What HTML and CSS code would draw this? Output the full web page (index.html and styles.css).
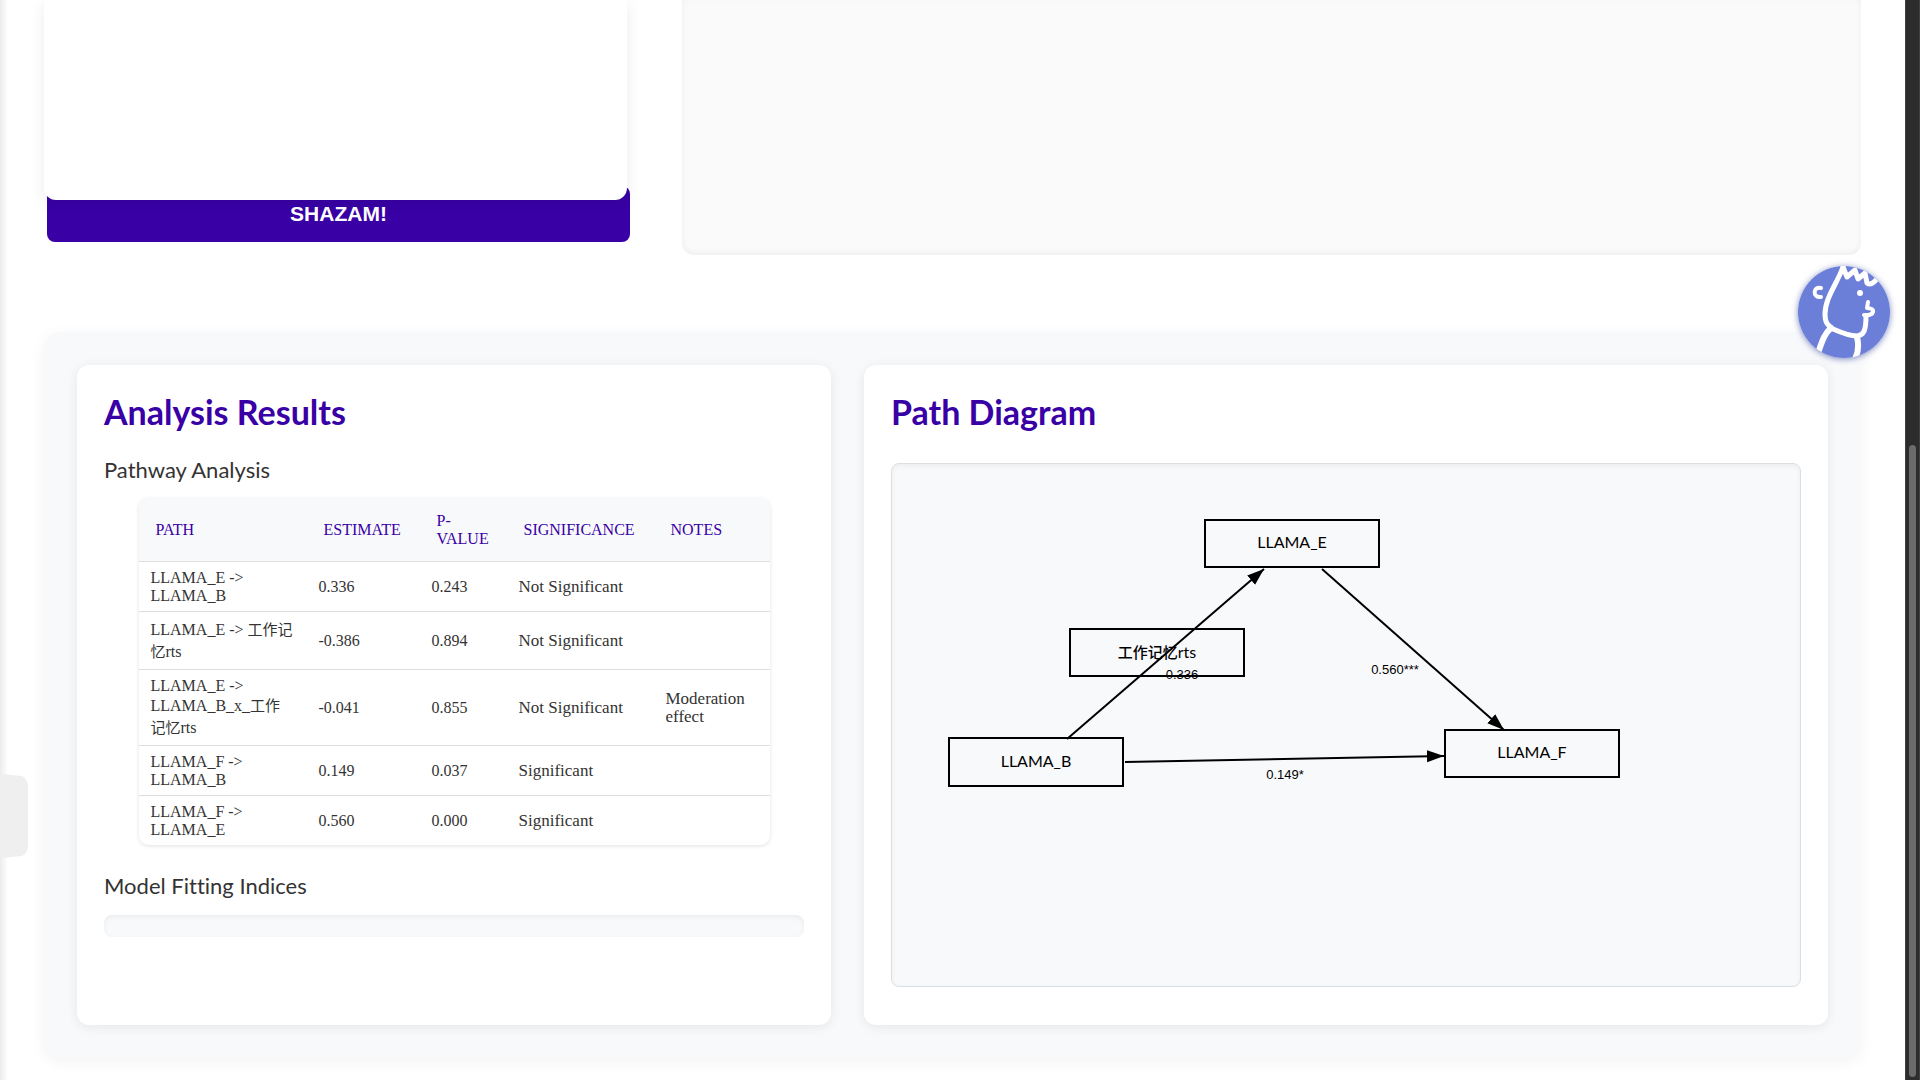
FILE: index.html
```html
<!DOCTYPE html>
<html lang="en">
<head>
<meta charset="utf-8">
<meta name="viewport" content="width=device-width, initial-scale=1">
<title>Path Analysis</title>
<link rel="stylesheet" href="styles.css">
</head>
<body>
<div class="page">
  <main class="content">
    <section class="workspace">
      <form class="setup">
        <div class="setup-card"></div>
        <button class="run" type="button">SHAZAM!</button>
      </form>
      <div class="canvas"></div>
    </section>

    <section class="results">
      <article class="card">
        <h2>Analysis Results</h2>
        <h3>Pathway Analysis</h3>
        <table class="paths">
          <colgroup><col class="c-path"><col class="c-est"><col class="c-p"><col class="c-sig"><col class="c-notes"></colgroup>
          <thead>
            <tr><th>PATH</th><th>ESTIMATE</th><th>P-<br>VALUE</th><th>SIGNIFICANCE</th><th>NOTES</th></tr>
          </thead>
          <tbody>
            <tr><td class="path">LLAMA_E -&gt;<br>LLAMA_B</td><td>0.336</td><td>0.243</td><td class="note">Not Significant</td><td class="note"></td></tr>
            <tr><td class="path">LLAMA_E -&gt; <span class="cjk">工作记<br>忆</span>rts</td><td>-0.386</td><td>0.894</td><td class="note">Not Significant</td><td class="note"></td></tr>
            <tr><td class="path">LLAMA_E -&gt;<br>LLAMA_B_x_<span class="cjk">工作<br>记忆</span>rts</td><td>-0.041</td><td>0.855</td><td class="note">Not Significant</td><td class="note">Moderation effect</td></tr>
            <tr><td class="path">LLAMA_F -&gt;<br>LLAMA_B</td><td>0.149</td><td>0.037</td><td class="note">Significant</td><td class="note"></td></tr>
            <tr><td class="path">LLAMA_F -&gt;<br>LLAMA_E</td><td>0.560</td><td>0.000</td><td class="note">Significant</td><td class="note"></td></tr>
          </tbody>
        </table>
        <h3>Model Fitting Indices</h3>
        <div class="indices"></div>
      </article>

      <article class="card">
        <h2>Path Diagram</h2>
        <div class="diagram">
          <svg width="906" height="522" viewBox="893 464 906 522" role="img" aria-label="Path diagram">
            <defs>
              <marker id="arrow" markerUnits="userSpaceOnUse" markerWidth="18" markerHeight="14" refX="17" refY="6" orient="auto"><path d="M0 0L17 6L0 12Z"/></marker>
            </defs>
            <g class="node">
              <rect x="1205" y="520" width="174" height="47"/>
              <rect x="1070" y="629" width="174" height="47"/>
              <rect x="949" y="738" width="174" height="48"/>
              <rect x="1445" y="730" width="174" height="47"/>
            </g>
            <g class="name">
              <text x="1292" y="548">LLAMA_E</text>
              <text x="1157" y="658"><tspan class="strong">工作记忆</tspan>rts</text>
              <text x="1036" y="767">LLAMA_B</text>
              <text x="1532" y="758">LLAMA_F</text>
            </g>
            <g class="edge">
              <path d="M1067 739L1264 569"/>
              <path d="M1322 569L1504 730"/>
              <path d="M1125 762L1444 756"/>
            </g>
            <g class="weight">
              <text x="1182" y="679">0.336</text>
              <text x="1395" y="674">0.560***</text>
              <text x="1285" y="779">0.149*</text>
            </g>
          </svg>
        </div>
      </article>
    </section>
  </main>
  <div class="scrollbar"><div class="thumb"></div></div>
</div>

<div class="drawer-edge"></div>
<button class="drawer-tab" type="button" aria-label="Open sidebar">
  <svg width="29" height="85" viewBox="0 0 29 85"><path d="M0 0L22 2Q28 5 28 13V72Q28 79 22 82L0 84Z" fill="#efefef"/></svg>
</button>
<button class="assistant" type="button" aria-label="Open assistant">
  <svg width="92" height="92" viewBox="0 0 92 92">
    <defs><clipPath id="disc"><circle cx="46" cy="46" r="46"/></clipPath></defs>
    <circle cx="46" cy="46" r="46" fill="#6c7fd8"/>
    <g clip-path="url(#disc)" fill="none" stroke="#fff" stroke-width="5" stroke-linecap="round" stroke-linejoin="round">
      <path d="M45 1C39 18 27 32 27 48C27 56 29 59 35 63C44 67 52 70 59 70C66 69 68 64 68 50"/>
      <path d="M45 1L49 11L57 4L60 13L67 7L69 17C73 20 76 16 78 14"/>
      <path d="M23 22C15 20 14 32 23 31" stroke-width="4"/>
      <path d="M70 36L69 42C78 42 77 50 66 49" stroke-width="4"/>
      <path d="M33 62C26 68 24 76 20 87M59 71C61 79 60 87 57 93" stroke-width="6"/>
      <circle cx="62" cy="27" r="3" fill="#fff" stroke="none"/>
    </g>
  </svg>
</button>
</body>
</html>
```
FILE: styles.css
```css
* { box-sizing: border-box; }

body {
  margin: 0;
  background: #fff;
  color: #333;
  font-family: Lato, "Noto Sans CJK SC", sans-serif;
}

.page { display: flex; min-height: 100vh; }

.content { flex: 1; min-width: 0; padding: 0 44px 22px; }

/* Setup form and canvas, scrolled so that only their lower ends show */
.workspace {
  display: grid;
  grid-template-columns: 586fr 1179fr;
  gap: 52px;
  margin-bottom: 77px;
}

.setup { display: flex; flex-direction: column; padding-bottom: 13px; }

.setup-card {
  position: relative;
  z-index: 1;
  height: 200px;
  margin-right: 3px;
  background: #fff;
  border-radius: 0 0 12px 12px;
  box-shadow: 0 4px 16px rgba(0, 0, 0, .08);
}

.run {
  height: 56px;
  margin: -14px 0 0 3px;
  padding: 0;
  border: 0;
  border-radius: 8px;
  background: #3900a6;
  color: #fff;
  font: bold 21px/56px "Liberation Sans", sans-serif;
}

.canvas {
  background: #fafafa;
  border-radius: 0 0 12px 12px;
  box-shadow: inset 0 -2px 6px rgba(0, 0, 0, .05);
}

.results {
  display: grid;
  grid-template-columns: 754fr 964fr;
  gap: 33px;
  padding: 33px;
  background: #f8f9fb;
  border-radius: 16px;
  box-shadow: 0 4px 16px rgba(0, 0, 0, .05);
}

.card {
  min-width: 0;
  min-height: 660px;
  padding: 28px 27px;
  background: #fff;
  border-radius: 12px;
  box-shadow: 0 2px 12px rgba(0, 0, 0, .08);
}

h2 {
  margin: 0;
  color: #3900a6;
  font-size: 34px;
  font-weight: 700;
  line-height: 38px;
}

h3 {
  margin: 26px 0 0;
  font-size: 22px;
  font-weight: 400;
  line-height: 26px;
  font-variant-ligatures: none;
}

.paths {
  width: 631px;
  max-width: 100%;
  margin: 15px auto 0;
  table-layout: fixed;
  border-spacing: 0;
  border-radius: 10px;
  overflow: hidden;
  box-shadow: 0 1px 4px rgba(0, 0, 0, .12);
  font: 16px/18px "Liberation Serif", "Noto Sans CJK SC", serif;
  text-align: left;
}

.c-path { width: 168px; }
.c-est { width: 113px; }
.c-p { width: 87px; }
.c-sig { width: 147px; }
.c-notes { width: 116px; }

.paths th {
  padding: 14px 17px 13px;
  background: #f8f9fb;
  color: #3900a6;
  font-weight: 400;
}

.paths td { padding: 7px 12px 6px; border-top: 1px solid #dcdfe2; }
.paths .path { white-space: nowrap; }
.paths .note { font-size: 17px; }

.cjk { font-size: 15px; line-height: 22px; }

.paths + h3 { margin-top: 28px; }

.indices {
  height: 22px;
  margin-top: 16px;
  border-radius: 8px;
  background: #f8f9fb;
  box-shadow: inset 0 2px 5px rgba(0, 0, 0, .06);
}

.diagram {
  height: 524px;
  margin-top: 32px;
  border: 1px solid #dcdfe2;
  border-radius: 8px;
  background: #f8f9fb;
  box-shadow: inset 0 2px 5px rgba(0, 0, 0, .05);
  overflow: hidden;
}

.diagram svg { display: block; margin: 0 auto; }
.node rect { fill: none; stroke: #000; stroke-width: 2; }
.edge path { stroke: #000; stroke-width: 2; marker-end: url(#arrow); }
.name text { font-size: 16px; text-anchor: middle; }
.strong { font-weight: 500; font-size: 15px; }
.weight text { font: 13px "Liberation Sans", sans-serif; text-anchor: middle; }

.scrollbar {
  width: 15px;
  padding: 445px 3px 3px;
  display: flex;
  background: #2c2c2c;
  border-left: 1px solid #404040;
  border-right: 1px solid #404040;
}

.thumb { flex: 1; border-radius: 4px; background: #6b6b6b; }

/* Shadow cast by the closed sidebar, and its handle */
.drawer-edge {
  position: fixed;
  inset: 0 auto 0 0;
  width: 8px;
  background: linear-gradient(to right, #ececec, #fff);
}

.drawer-tab, .assistant {
  position: fixed;
  padding: 0;
  border: 0;
  background: none;
}

.drawer-tab { left: 0; top: 774px; }
.drawer-tab svg, .assistant svg { display: block; }

.assistant {
  top: 266px;
  right: 30px;
  border-radius: 50%;
  box-shadow: 0 1px 6px rgba(40, 60, 150, .6);
  z-index: 2;
}
```
